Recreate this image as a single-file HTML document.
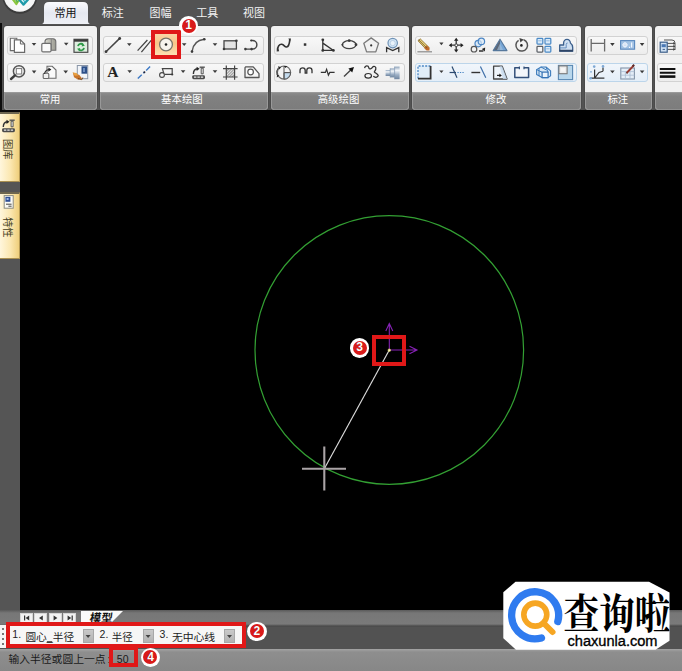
<!DOCTYPE html>
<html><head><meta charset="utf-8"><title>CAD</title><style>
*{margin:0;padding:0;box-sizing:border-box}
html,body{width:682px;height:671px;overflow:hidden;background:#000;font-family:"Liberation Sans",sans-serif}
#app{position:relative;width:682px;height:671px;overflow:hidden;background:#000}
.abs{position:absolute}
#ribbon{position:absolute;left:0;top:0;width:682px;height:110px;background:#535353;overflow:hidden}
#ribbon .edge{position:absolute;left:0;top:23px;width:1.5px;height:87px;background:#0c0c0c}
.tab-active{position:absolute;left:44px;top:2px;width:44px;height:22px;border-radius:5px 5px 0 0;background:linear-gradient(#fdfdfe,#e9ecf2 60%,#eef0f4);}
.panel{position:absolute;top:26px;height:84px;background:#f1f1f1;border-radius:3px 3px 4px 4px;overflow:hidden;box-shadow:0 0 0 1px #4a4a4a}
.panel .lab{position:absolute;left:0;right:0;top:66px;height:18px;background:linear-gradient(#8b8b8b,#818181 20%,#7c7c7c);border-top:1px solid #9a9a9a;box-shadow:inset 1px 0 #999,inset -1px 0 #999,inset 0 -1px #909090;border-radius:0 0 4px 4px}
.grp.blue{border-color:#bcd5ea;background:linear-gradient(#f1f6fb,#e4eef8)}
.grp{position:absolute;height:19px;border:1px solid #d2d2d2;border-radius:3px;background:linear-gradient(#f8f8f8,#ededed)}
#side{position:absolute;left:0;top:110px;width:20px;height:500px;background:#555;border-top:2px solid #0a0a0a}
.stab{position:absolute;left:0;width:20px;background:linear-gradient(90deg,#fff6dc,#fbe7b0 55%,#efcf7c);border-top:2px solid #6d6650;border-right:1px solid #b79b55;border-bottom:1px solid #a98f50}
#b1{position:absolute;left:0;top:610px;width:682px;height:17px;background:linear-gradient(#5a5a5a,#777 3px,#7a7a7a 14px,#4c4c4c 16px)}
#b2{position:absolute;left:0;top:627px;width:682px;height:22px;background:#525252}
#b3{position:absolute;left:0;top:649px;width:682px;height:22px;background:linear-gradient(#a4a4a4,#8e8e8e 3px,#878787)}
.nav{position:absolute;top:612.8px;width:13px;height:9.4px;background:#f2f2f2;border:1px solid #d6d6d6;border-bottom:none}
#tool{position:absolute;left:0;top:625px;width:243px;height:23px;background:#f6f6f6}
.dd{position:absolute;top:629px;height:14px;width:11px;background:linear-gradient(#c9c9c9,#b3b3b3);border:1px solid #a8a8a8}
.red{position:absolute;border:4px solid #e01818}
.badge{position:absolute;width:19.6px;height:19.6px;border-radius:50%;background:#fff}
.badge i{position:absolute;left:2.8px;top:2.8px;width:14px;height:14px;border-radius:50%;background:#d91a1a}
.badge b{position:absolute;left:0;top:0;width:19.6px;text-align:center;text-shadow:-0.6px 0 0 #7a0c0c;font:bold 12px/19.6px "Liberation Sans",sans-serif;color:#fff}
svg{position:absolute;left:0;top:0;overflow:visible}
</style></head><body><div id="app">
<div id="ribbon"><div class="edge"></div>
<div class="panel" style="left:4px;width:93px"><div class="lab"></div><div class="grp" style="left:3px;width:86px;top:10px"></div><div class="grp" style="left:3px;width:86px;top:37px"></div></div>
<div class="panel" style="left:100px;width:168px"><div class="lab"></div><div class="grp" style="left:3px;width:161px;top:10px"></div><div class="grp" style="left:3px;width:161px;top:37px"></div></div>
<div class="panel" style="left:271px;width:138px"><div class="lab"></div><div class="grp" style="left:3px;width:131px;top:10px"></div><div class="grp" style="left:3px;width:131px;top:37px"></div></div>
<div class="panel" style="left:412px;width:169px"><div class="lab"></div><div class="grp" style="left:3px;width:162px;top:10px"></div><div class="grp blue" style="left:3px;width:162px;top:37px"></div></div>
<div class="panel" style="left:585px;width:67px"><div class="lab"></div><div class="grp" style="left:2px;width:61px;top:10px"></div><div class="grp blue" style="left:2px;width:61px;top:37px"></div></div>
<div class="panel" style="left:655px;width:45px"><div class="lab"></div><div class="grp" style="left:2px;width:43px;top:10px"></div><div class="grp" style="left:2px;width:43px;top:37px"></div></div>
</div>
<div id="side"><div class="stab" style="top:0px;height:70px"></div><div class="stab" style="top:80px;height:67px"></div></div>
<div id="b1"></div><div id="b2"></div><div id="b3"></div>
<div class="nav" style="left:19.7px"></div>
<div class="nav" style="left:34.4px"></div>
<div class="nav" style="left:48.8px"></div>
<div class="nav" style="left:63.4px"></div>
<div id="tool"></div>
<div class="dd" style="left:83px"></div>
<div class="dd" style="left:143px"></div>
<div class="dd" style="left:224px"></div>
<svg width="682" height="671" viewBox="0 0 682 671">
<defs><linearGradient id="gtab" x1="0" y1="0" x2="0" y2="1"><stop offset="0" stop-color="#fbfbfd"/><stop offset="0.5" stop-color="#e6e9f1"/><stop offset="1" stop-color="#eef0f5"/></linearGradient></defs><path d="M41.6 24Q44 23.6 44 20.5V7Q44 2 49 2H83Q88 2 88 7V20.5Q88 23.6 90.4 24Z" fill="url(#gtab)"/>
<text x="65.5" y="16.9" font-family="'Liberation Sans','Noto Sans CJK SC',sans-serif" font-size="11" fill="#111" text-anchor="middle">常用</text>
<text x="112.7" y="16.9" font-family="'Liberation Sans','Noto Sans CJK SC',sans-serif" font-size="11" fill="#f4f4f4" text-anchor="middle">标注</text>
<text x="160.4" y="16.9" font-family="'Liberation Sans','Noto Sans CJK SC',sans-serif" font-size="11" fill="#f4f4f4" text-anchor="middle">图幅</text>
<text x="207.3" y="16.9" font-family="'Liberation Sans','Noto Sans CJK SC',sans-serif" font-size="11" fill="#f4f4f4" text-anchor="middle">工具</text>
<text x="254.1" y="16.9" font-family="'Liberation Sans','Noto Sans CJK SC',sans-serif" font-size="11" fill="#f4f4f4" text-anchor="middle">视图</text>
<text x="50.05" y="103.3" font-family="'Liberation Sans','Noto Sans CJK SC',sans-serif" font-size="10.4" fill="#fff" text-anchor="middle">常用</text>
<text x="181.9" y="103.3" font-family="'Liberation Sans','Noto Sans CJK SC',sans-serif" font-size="10.4" fill="#fff" text-anchor="middle">基本绘图</text>
<text x="338.5" y="103.3" font-family="'Liberation Sans','Noto Sans CJK SC',sans-serif" font-size="10.4" fill="#fff" text-anchor="middle">高级绘图</text>
<text x="496" y="103.3" font-family="'Liberation Sans','Noto Sans CJK SC',sans-serif" font-size="10.4" fill="#fff" text-anchor="middle">修改</text>
<text x="617.8" y="103.3" font-family="'Liberation Sans','Noto Sans CJK SC',sans-serif" font-size="10.4" fill="#fff" text-anchor="middle">标注</text>
<path d="M10.3 38.3h6.5v12.3h-6.5z" fill="#fbfbfb" stroke="#6a6a6a" stroke-width="1.1"/>
<path d="M14.4 39.8h6l4.2 4.2v8.3h-10.2z" fill="#fff" stroke="#6a6a6a" stroke-width="1.2"/><path d="M20.4 39.8v4.2h4.2" fill="none" stroke="#6a6a6a" stroke-width="1"/>
<path d="M31.7 43.0h4.6l-2.3 2.8z" fill="#3a3a3a"/>
<defs><linearGradient id="gsh" x1="0" x2="1"><stop offset="0" stop-color="#d8d8d0"/><stop offset="1" stop-color="#9a9a90"/></linearGradient></defs>
<path d="M45 41.5q0-2.6 3-2.8h5q2.8 0.2 2.8 2.8v8.7h-10.8z" fill="url(#gsh)" stroke="#6e6e6e" stroke-width="1.1"/>
<path d="M51.3 39v11" stroke="#777" stroke-width="0.8"/>
<rect x="41.8" y="43.3" width="9.2" height="8.6" rx="1.2" fill="#fafafa" stroke="#6e6e6e" stroke-width="1.2"/>
<path d="M63.900000000000006 42.800000000000004h4.6l-2.3 2.8z" fill="#3a3a3a"/>
<rect x="74" y="39.3" width="13.8" height="13" fill="#dfeee0" stroke="#4a4a4a" stroke-width="1.2"/><rect x="74" y="39.3" width="13.8" height="2.4" fill="#3c3c3c"/>
<path d="M78 46.2a3 3 0 0 1 5.2-1.4M84 47.8a3 3 0 0 1-5.2 1.6" fill="none" stroke="#2f9a48" stroke-width="1.8"/><path d="M82.3 43.2l2.6 2.6-3.2 0.6zM79.6 51.2l-2.6-2.4 3.2-0.8z" fill="#2f9a48"/>
<circle cx="19" cy="71.3" r="5.6" fill="#f4f4f4" stroke="#555" stroke-width="1.5"/><rect x="16.3" y="68.6" width="5.4" height="5.4" fill="#fff" stroke="#777" stroke-width="1"/><path d="M15 75.4l-4 3.6" stroke="#3c3c3c" stroke-width="2.4" stroke-linecap="round"/>
<path d="M31.8 70.6h4.6l-2.3 2.8z" fill="#3a3a3a"/>
<path d="M47 66.3h5.2l3.8 3.8v8.2h-9z" fill="#fafafa" stroke="#6a6a6a" stroke-width="1.1"/><rect x="43.2" y="73.3" width="5.6" height="5.2" rx="1" fill="#f0f0f0" stroke="#6a6a6a" stroke-width="1.1"/><path d="M44.5 74c0.5-3 2-4.2 4.5-4.4" fill="none" stroke="#333" stroke-width="1.2"/><path d="M48.4 67.5l3 2.1-3 2.1z" fill="#222"/>
<path d="M63.400000000000006 70.6h4.6l-2.3 2.8z" fill="#3a3a3a"/>
<rect x="77.3" y="65.5" width="10.4" height="13.2" fill="#f1f4f8" stroke="#8a96a8" stroke-width="1"/><rect x="81.5" y="66.3" width="5.6" height="7.4" fill="#2c4f88"/><path d="M83 68h2v4h-2z" fill="#6f8fc0"/>
<path d="M72.8 72.6l6.6 2.4 2.6 3.6-3.6 1.2-4.4-2.6z" fill="#c8742a"/><path d="M72.6 72.4l4 0.6 1.6 2.6-3.4 0.2z" fill="#e8a040"/><path d="M78 78.5l3.8 1.2 1-2.2" fill="none" stroke="#7a4a20" stroke-width="1"/>
<path d="M106 51.7L119.7 38.4" stroke="#454545" stroke-width="1.5"/><circle cx="106" cy="51.7" r="1.4" fill="#3a3a3a"/><circle cx="119.7" cy="38.5" r="1.4" fill="#3a3a3a"/>
<path d="M127.00000000000001 43.2h4.6l-2.3 2.8z" fill="#3a3a3a"/>
<path d="M137.6 50.6L147.4 40M141.4 52.2L151.2 40.4" stroke="#454545" stroke-width="1.3"/>
<defs><linearGradient id="gor" x1="0" y1="0" x2="0" y2="1"><stop offset="0" stop-color="#fbd9ae"/><stop offset="0.45" stop-color="#f8c588"/><stop offset="1" stop-color="#fde6bd"/></linearGradient></defs>
<rect x="153" y="31" width="27" height="27" fill="url(#gor)"/>
<circle cx="166" cy="44.5" r="6.4" fill="#f7f3ec" stroke="#77746a" stroke-width="1.3"/><circle cx="166" cy="44.5" r="1.3" fill="#222"/>
<path d="M181.89999999999998 43.2h4.6l-2.3 2.8z" fill="#3a3a3a"/>
<path d="M192 51.6C193 44.5 197.5 40 204.2 39.3" fill="none" stroke="#555" stroke-width="1.4"/><circle cx="192" cy="51.6" r="1.3" fill="#3a3a3a"/><circle cx="204.3" cy="39.3" r="1.3" fill="#3a3a3a"/>
<path d="M212.7 43.2h4.6l-2.3 2.8z" fill="#3a3a3a"/>
<rect x="224" y="40.8" width="12.4" height="8.2" fill="#e3e3e3" stroke="#454545" stroke-width="1.3"/><circle cx="236.4" cy="40.8" r="1.3" fill="#3a3a3a"/><circle cx="224" cy="49" r="1.3" fill="#3a3a3a"/>
<path d="M245.4 49.1H252.6A4.3 4.3 0 0 0 252.6 40.5H251.4" fill="none" stroke="#454545" stroke-width="1.4"/><circle cx="245.4" cy="49.1" r="1.3" fill="#3a3a3a"/><circle cx="251.6" cy="49.1" r="1.3" fill="#3a3a3a"/><circle cx="251.2" cy="40.5" r="1.1" fill="#3a3a3a"/>
<text x="112.9" y="77.2" font-family="Liberation Serif, serif" font-weight="bold" font-size="15.5" text-anchor="middle" fill="#222">A</text>
<path d="M127.39999999999999 70.3h4.6l-2.3 2.8z" fill="#3a3a3a"/>
<path d="M137.8 78.6L150.6 66.1" stroke="#3c78c4" stroke-width="1.4" stroke-dasharray="5.5 2.2 1.8 2.2"/><circle cx="144.4" cy="72.2" r="1" fill="#223"/>
<path d="M163.8 73.3L162.4 68.7H172.2V74.4H164.6" fill="#f4f4f4" stroke="#454545" stroke-width="1.2"/><circle cx="162" cy="75" r="2.4" fill="#f4f4f4" stroke="#454545" stroke-width="1.1"/><circle cx="172.2" cy="74.5" r="1.1" fill="#3a3a3a"/>
<path d="M180.79999999999998 70.3h4.6l-2.3 2.8z" fill="#3a3a3a"/>
<g transform="translate(192,66.6) scale(1.0)"><rect x="0.2" y="8.6" width="12.8" height="4" rx="1.4" fill="#4a4a4a"/><path d="M2 10.6h2.4M5.4 10.6h2.4M8.8 10.6h2.4" stroke="#e8e8e8" stroke-width="1.2"/><path d="M1.4 7.4C1.4 4 2.8 2.4 5.4 2.2" fill="none" stroke="#333" stroke-width="1.4"/><path d="M4.6 0.2l3 2-3 2.2z" fill="#222"/><path d="M7.6 0.6h5.2" stroke="#555" stroke-width="1.4"/><path d="M9.2 1.6h2v5.6h-2z" fill="#f2f2f2" stroke="#444" stroke-width="0.9"/></g>
<path d="M212.7 70.3h4.6l-2.3 2.8z" fill="#3a3a3a"/>
<defs><pattern id="hat" width="2" height="2" patternUnits="userSpaceOnUse" patternTransform="rotate(45)"><rect width="2" height="2" fill="#e4e4e4"/><rect width="1" height="2" fill="#9a9a9a"/></pattern></defs>
<rect x="226.3" y="68.6" width="8.2" height="8.4" fill="url(#hat)"/><path d="M226.3 65.4V79.8M234.6 65.4V79.8M223 68.6H237.6M223 77H237.6" stroke="#454545" stroke-width="1.2"/>
<path d="M245.8 66.8H253.2L259 73.6V77.5H245V67.6z" fill="#f6f6f6" stroke="#555" stroke-width="1.3" stroke-linejoin="round"/><circle cx="250.6" cy="72" r="2.8" fill="#fff" stroke="#555" stroke-width="1.2"/>
<path d="M277.5 50.8C277.4 46.4 279.4 44 281.8 44.3S284.6 47.3 286.6 47S289.5 44 289.8 39.4" fill="none" stroke="#333" stroke-width="1.6"/><path d="M276.6 51.4l1.4-3.6 1.2 3.4zM288.4 38.6h2.6l-1 3.4z" fill="#333"/>
<rect x="303.8" y="43.3" width="2.5" height="2.5" fill="#333"/>
<path d="M322.8 39.8V50.4H333.4M323.2 43.4L332.8 50" fill="none" stroke="#333" stroke-width="1.3"/><circle cx="322.8" cy="39.8" r="1.4" fill="#333"/><circle cx="333.4" cy="50.4" r="1.4" fill="#333"/><circle cx="322.8" cy="50.4" r="1.4" fill="#333"/>
<ellipse cx="349.2" cy="44.7" rx="6.8" ry="4" fill="#f6f6f6" stroke="#444" stroke-width="1.3"/><circle cx="349.2" cy="40.6" r="1.4" fill="#3a3a3a"/><circle cx="356" cy="44.7" r="1.4" fill="#3a3a3a"/><circle cx="342.4" cy="44.7" r="1.0" fill="#3a3a3a"/>
<path d="M371.2 37.9L378.6 43.3L375.8 51.9H366.6L363.8 43.3z" fill="#f1f1f1" stroke="#7a7a7a" stroke-width="1.3" stroke-linejoin="round"/><circle cx="371.2" cy="45.4" r="1.1" fill="#333"/>
<circle cx="392.7" cy="43.1" r="4.7" fill="#d2e6f6" stroke="#6f92b6" stroke-width="1.2"/><circle cx="392.7" cy="43.1" r="2.6" fill="#e9f3fb" stroke="#9fbcd8" stroke-width="0.6"/><path d="M386.6 52.2V47.6L392.7 50.6L398.8 47.6V52.2" fill="none" stroke="#333" stroke-width="1.3"/>
<circle cx="284" cy="72.6" r="6.6" fill="#f4f4f4" stroke="#6a6a6a" stroke-width="1.2"/><path d="M284 72.6H290.6A6.6 6.6 0 0 1 284 79.2z" fill="#c4dbee" stroke="#555" stroke-width="1"/><path d="M284 66V79M284 72.6H290.5" stroke="#555" stroke-width="1"/>
<path d="M279 69.4l-0.8-3.4 2.8 1.6zM279.4 75.8l-2.6 1.8 0.2-3.2z" fill="#222"/><path d="M278.4 67.6a7.6 7.6 0 0 0-1.4 7.4" fill="none" stroke="#333" stroke-width="0.9"/><path d="M284 65.9l3.4 0.2-2 2z" fill="#222"/>
<path d="M300 73.2V70.4A2.6 2.6 0 0 1 305.2 70.4V73.2H306.8V70.4A2.6 2.6 0 0 1 312 70.4V73.2" fill="none" stroke="#333" stroke-width="1.3"/>
<path d="M320.8 72.4H325.4L326.6 69.4L328.4 75.2L329.8 72.4H334.6" fill="none" stroke="#333" stroke-width="1.2"/>
<path d="M344 76.4L351 69.8" stroke="#444" stroke-width="1.4"/><path d="M354 67l-1.8 5.4-3.8-3.8z" fill="#111"/>
<path d="M364.6 68.2C365 65.2 368.4 65.4 368.8 67.6S371.6 68.8 372.6 67.2S376.4 66.4 375.8 69S373.4 71.6 375 72.6S379.4 75.2 377.6 76.6S374 77 373.4 76" fill="none" stroke="#333" stroke-width="1.3"/><ellipse cx="368.2" cy="75.8" rx="3.3" ry="2.3" fill="#f6f6f6" stroke="#333" stroke-width="1.2"/>
<defs><linearGradient id="gcy" x1="0" y1="0" x2="0" y2="1"><stop offset="0" stop-color="#8ea3bb"/><stop offset="0.3" stop-color="#f4f7fa"/><stop offset="0.65" stop-color="#9db0c6"/><stop offset="1" stop-color="#6f859f"/></linearGradient></defs>
<rect x="385.6" y="70" width="4.6" height="6" fill="url(#gcy)"/><rect x="390.2" y="68.4" width="4.4" height="9" fill="url(#gcy)"/><rect x="394.6" y="66.6" width="5" height="12.6" fill="url(#gcy)"/><path d="M390.2 68.4V77.4M394.6 66.6V79.2" stroke="#6a86a6" stroke-width="0.6"/>
<path d="M417.4 51.8H432" stroke="#8a8a8a" stroke-width="1.2"/><path d="M418 40.8l2.2-2 9 8.8-2.4 2.4z" fill="#e6d07a" stroke="#8a6a2a" stroke-width="0.8"/><path d="M426.6 45.2l3 3-0.2 2.4-2.8 0-2.4-2.6z" fill="#c06a2c"/><path d="M418.6 39.8l8.4 8.4" stroke="#6a5020" stroke-width="0.8"/>
<path d="M439.29999999999995 42.6h4.2l-2.1 2.6z" fill="#3a3a3a"/>
<path d="M456.2 39.6V50.8M450.6 45.2H461.8" stroke="#333" stroke-width="1.3"/><path d="M456.2 37.8l2.2 3h-4.4zM456.2 52.6l2.2-3h-4.4zM448.8 45.2l3-2.2v4.4zM463.6 45.2l-3-2.2v4.4z" fill="#222"/><rect x="455.1" y="44.1" width="2.2" height="2.2" fill="#fff" stroke="#333" stroke-width="0.6"/>
<circle cx="478.2" cy="43.6" r="3.2" fill="#d8e8f6" stroke="#4d86c4" stroke-width="1.2"/><circle cx="481.4" cy="41.4" r="3.2" fill="#d8e8f6" fill-opacity="0.7" stroke="#4d86c4" stroke-width="1.2"/><circle cx="474" cy="49.2" r="2.8" fill="#f4f4f4" stroke="#555" stroke-width="1.2"/><path d="M479 51H483.4" stroke="#222" stroke-width="1.4"/><path d="M485.2 47.6l-0.4 4-3-2.6z" fill="#222"/>
<path d="M500 39.2L493.2 50.6H500z" fill="#5d6878"/><path d="M500 39.2L507 50.6H500z" fill="#77a6d6"/><path d="M500 39.2L493.2 50.6H507z" fill="none" stroke="#56789c" stroke-width="1.1" stroke-linejoin="round"/><path d="M500 43.5L497 50H503z" fill="#a9c4de" opacity="0.6"/>
<path d="M523.6 39.8A5.8 5.8 0 1 1 518.6 40.4" fill="none" stroke="#555" stroke-width="1.5"/><path d="M519.4 38l4.4 1.4-3.4 3z" fill="#444"/><circle cx="521.4" cy="45.4" r="1.3" fill="#222"/>
<rect x="537" y="38.4" width="5.8" height="5.6" rx="0.8" fill="#dcebf8" stroke="#4b8ac6" stroke-width="1.25"/>
<path d="M538.2 40.8h3.4" stroke="#4b8ac6" stroke-width="0.7" opacity="0.7"/>
<rect x="545" y="38.4" width="5.8" height="5.6" rx="0.8" fill="#dcebf8" stroke="#4b8ac6" stroke-width="1.25"/>
<path d="M546.2 40.8h3.4" stroke="#4b8ac6" stroke-width="0.7" opacity="0.7"/>
<rect x="537" y="46.4" width="5.8" height="5.6" rx="0.8" fill="#f8f8f8" stroke="#5a5f66" stroke-width="1.25"/>
<rect x="545" y="46.4" width="5.8" height="5.6" rx="0.8" fill="#dcebf8" stroke="#4b8ac6" stroke-width="1.25"/>
<path d="M546.2 48.8h3.4" stroke="#4b8ac6" stroke-width="0.7" opacity="0.7"/>
<path d="M559.7 51.2V45H563.6V43A3.4 3.7 0 0 1 570.4 43Q572.7 44.6 572.7 47.6V51.2z" fill="#cfe0f2" stroke="#3b5f8c" stroke-width="1.3" stroke-linejoin="round"/><path d="M560 47.9H566.2V44.4Q566.4 42.8 567.6 43" fill="none" stroke="#5b86b8" stroke-width="0.9"/><path d="M559.4 50.7H572.9" stroke="#2e4566" stroke-width="1.9"/>
<rect x="418" y="66" width="12.6" height="12.6" fill="#e0edf8"/><path d="M418 78.6V66H430.6" fill="none" stroke="#4a86c4" stroke-width="1.3" stroke-dasharray="2 1.3"/><path d="M430.6 66V78.6H418" fill="none" stroke="#333" stroke-width="1.8"/>
<path d="M439.29999999999995 70.4h4.2l-2.1 2.6z" fill="#3a3a3a"/>
<path d="M449.6 72.5H456" stroke="#2c4a70" stroke-width="1.2"/><path d="M457.4 72.5H464.4" stroke="#4a86c4" stroke-width="1.2" stroke-dasharray="1.3 1.2"/><path d="M452 66.6L457 77.8" stroke="#2c4a70" stroke-width="1.2"/>
<path d="M471.4 72.5H480.2" stroke="#333" stroke-width="1.4"/><path d="M480.4 66.6L485.8 77.8" stroke="#3f6fa8" stroke-width="1.2"/>
<path d="M493.6 66.2H502.2L507 79H493.6z" fill="#eef4fa" stroke="#444" stroke-width="1.3" stroke-linejoin="round"/><path d="M502.2 66.2L507 79H503L499.6 66.2z" fill="#c5daee" opacity="0.8"/><path d="M497 75.4H500" stroke="#222" stroke-width="1.2"/><path d="M501.8 75.4l-2.4-1.8v3.6z" fill="#111"/>
<path d="M519.4 67.8H514.8V77.6H528.6V67.8H524" fill="#f3f6fa" stroke="#33507a" stroke-width="1.5" stroke-linejoin="round"/><path d="M519.4 66.6V69.2M524 66.6V69.2" stroke="#33507a" stroke-width="1.2"/>
<path d="M536.6 69.6L541 67H546L550.6 70.8V75.8L548 77.6H542L536.6 74.6z" fill="#d9e8f5" stroke="#3d7cbc" stroke-width="1.1" stroke-linejoin="round"/><path d="M536.6 69.6L542 72.2M541 67L546.4 70M546 67L548 72.2M539 68.2V76" fill="none" stroke="#3d7cbc" stroke-width="1"/><rect x="542.1" y="72.1" width="6" height="5.5" fill="#e9f3fb" stroke="#3573b4" stroke-width="1.2"/>
<rect x="558.4" y="65.4" width="14.2" height="14.2" fill="#b9d7ec" stroke="#5a88b2" stroke-width="1.1"/><rect x="558.9" y="65.9" width="8.2" height="7.8" fill="#ececec" stroke="#7a7a7a" stroke-width="1.1"/><rect x="561" y="68" width="4" height="3.6" fill="#f6f6f6"/>
<path d="M591.2 39V51.6M604.6 39V51.6M591.2 43.4H604.6" fill="none" stroke="#6a6a6a" stroke-width="1.3"/>
<path d="M610.1 43.1h4.6l-2.3 2.8z" fill="#3a3a3a"/>
<rect x="620.6" y="40.6" width="14" height="8.6" fill="#a3c2e4" stroke="#5a88be" stroke-width="1.1"/><circle cx="625" cy="44.9" r="2" fill="none" stroke="#f4f8ff" stroke-width="1"/><path d="M625 42.2V47.6M622.4 44.9H627.6" stroke="#f4f8ff" stroke-width="0.8"/><path d="M629 47.4h1M631.6 42.6V47.4" stroke="#f4f8ff" stroke-width="1.1"/>
<path d="M639.8000000000001 43.1h4.6l-2.3 2.8z" fill="#3a3a3a"/>
<path d="M594.6 69.6V78.2M590.6 78.2H604.4M594.6 78.2L599 72.4L603 71.2M603 71.2V67.6" fill="none" stroke="#333" stroke-width="1.2"/><circle cx="594.2" cy="66.6" r="1.3" fill="#7fa8d4"/><circle cx="603" cy="66.4" r="1.3" fill="#7fa8d4"/><circle cx="590.6" cy="78.2" r="1.3" fill="#7fa8d4"/><circle cx="591" cy="71.8" r="0.9" fill="#7fa8d4"/>
<path d="M610.1 70.5h4.6l-2.3 2.8z" fill="#3a3a3a"/>
<rect x="620.8" y="68" width="13.6" height="11" fill="#e4eef8" stroke="#8494a8" stroke-width="1.1"/><path d="M620.8 71.6H634.4M620.8 75.2H634.4M625.4 71.6V79M630 71.6V79" stroke="#a9bdd2" stroke-width="0.8"/><path d="M626.6 73L633.6 65.6" stroke="#9a3a30" stroke-width="1.9"/><path d="M626.2 73.6l0.4-1.6 1.2 1.2z" fill="#333"/><path d="M632.6 66.4l1.6-1.6" stroke="#5a2a28" stroke-width="2"/>
<path d="M639.8000000000001 70.5h4.6l-2.3 2.8z" fill="#3a3a3a"/>
<path d="M664 40H672Q675 40 675 43V50M666 43.4H675M666 46.4H675M666 49.4H675" fill="none" stroke="#555" stroke-width="1"/><path d="M673.2 42l2 1.4-2 1.4zM673.2 45l2 1.4-2 1.4zM673.2 48l2 1.4-2 1.4z" fill="#444"/><rect x="660.2" y="42.2" width="7" height="10" fill="#cfe0f2" stroke="#3d5f8a" stroke-width="1.2"/><rect x="661.6" y="44.2" width="4.2" height="3" fill="#4a78b4"/><path d="M662.6 49.4h2.4" stroke="#3d5f8a" stroke-width="1"/>
<path d="M659.8 69H675.4M659.8 72.8H675.4" stroke="#111" stroke-width="2"/><path d="M659.8 76.6H675.4" stroke="#111" stroke-width="2.6"/>
<defs><radialGradient id="gorb" cx="0.5" cy="0.6" r="0.6"><stop offset="0" stop-color="#ffffff"/><stop offset="0.75" stop-color="#f3f4f4"/><stop offset="1" stop-color="#c9cdd0"/></radialGradient></defs><circle cx="19.8" cy="-3.6" r="17.4" fill="#3c3c3c"/><circle cx="19.8" cy="-4.3" r="16" fill="url(#gorb)"/><path d="M12.6 -1L16.4 4L20.4 -2.4" fill="none" stroke="#8cc63f" stroke-width="2.2" stroke-linejoin="round"/><path d="M14.6 -1.8L17.6 2.4" stroke="#4fae4a" stroke-width="1.4"/><path d="M17.6 -2.4L23.4 4.6L29.4 -2" fill="none" stroke="#1f9aa8" stroke-width="2.4" stroke-linejoin="round"/><path d="M22 -1.6L25 2" stroke="#2fb8c8" stroke-width="1.2"/>
<g transform="translate(4,138.5) rotate(90)"><text x="0.4" y="0.1" font-family="'Liberation Sans','Noto Sans CJK SC',sans-serif" font-size="10.3" fill="#453e22">图库</text></g>
<g transform="translate(4,216.9) rotate(90)"><text x="0" y="0.1" font-family="'Liberation Sans','Noto Sans CJK SC',sans-serif" font-size="10.3" fill="#453e22">特性</text></g>
<g transform="translate(1.9,119.6) scale(1.0)"><rect x="0.2" y="8.6" width="12.8" height="4" rx="1.4" fill="#4a4a4a"/><path d="M2 10.6h2.4M5.4 10.6h2.4M8.8 10.6h2.4" stroke="#e8e8e8" stroke-width="1.2"/><path d="M1.4 7.4C1.4 4 2.8 2.4 5.4 2.2" fill="none" stroke="#333" stroke-width="1.4"/><path d="M4.6 0.2l3 2-3 2.2z" fill="#222"/><path d="M7.6 0.6h5.2" stroke="#555" stroke-width="1.4"/><path d="M9.2 1.6h2v5.6h-2z" fill="#f2f2f2" stroke="#444" stroke-width="0.9"/></g>
<rect x="4.2" y="195.6" width="9" height="12.6" fill="#fbfbf6" stroke="#8a8a80" stroke-width="1"/><rect x="5.4" y="196.8" width="5" height="5" fill="#2e4f96"/><rect x="6.6" y="198" width="2" height="2" fill="#9fb8e8"/><path d="M6 204.2h5.6M8.4 206.2h3.2" stroke="#444" stroke-width="1"/>
<circle cx="389.3" cy="350" r="134.3" fill="none" stroke="#33a033" stroke-width="1.2"/>
<line x1="389.3" y1="350" x2="324.3" y2="468.7" stroke="#dcdcdc" stroke-width="1.15"/>
<path d="M302 468.7H346M324.3 446.5V490.5" stroke="#aaa4a6" stroke-width="2.1" fill="none"/>
<path d="M389.3 350V324M385.8 331L389.3 323.5L392.8 331M389.3 350H416M409.5 346.3L417 350L409.5 353.7" stroke="#8822b8" stroke-width="1.05" fill="none"/>
<circle cx="389.3" cy="350.2" r="1.3" fill="#fffbd0" stroke="#c8c050" stroke-width="0.7"/>
<path d="M24 615.4v5h1.2v-5zM29.2 615.4v5l-3.6-2.5zM42.8 615.4v5l-3.8-2.5zM53.6 615.4v5l3.8-2.5zM67.6 615.4v5l3.6-2.5zM71.6 615.4v5h1.2v-5z" fill="#333"/>
<path d="M81 622V611H123L112 622Z" fill="#fafafa"/>
<g transform="translate(89.4,621.4) skewX(-8)"><text x="0" y="0.2" font-family="'Liberation Sans','Noto Sans CJK SC',sans-serif" font-size="11.4" font-weight="bold" fill="#111">模型</text></g>
<g fill="#777"><rect x="2" y="628" width="2" height="2"/><rect x="2" y="633" width="2" height="2"/><rect x="2" y="638" width="2" height="2"/><rect x="2" y="643" width="2" height="2"/></g>
<text x="12.3" y="637.6" font-family="Liberation Sans, sans-serif" font-size="10.5" font-weight="normal" fill="#222" text-anchor="start" >1.</text>
<text x="25.4" y="640.8" font-family="'Liberation Sans','Noto Sans CJK SC',sans-serif" font-size="10.5" fill="#222" textLength="48.8" lengthAdjust="spacingAndGlyphs">圆心_半径</text>
<rect x="46.9" y="641.3" width="5.3" height="1.1" fill="#222"/>
<text x="99.6" y="637.6" font-family="Liberation Sans, sans-serif" font-size="10.5" font-weight="normal" fill="#222" text-anchor="start" >2.</text>
<text x="111.8" y="640.8" font-family="'Liberation Sans','Noto Sans CJK SC',sans-serif" font-size="10.5" fill="#222">半径</text>
<text x="159.6" y="637.6" font-family="Liberation Sans, sans-serif" font-size="10.5" font-weight="normal" fill="#222" text-anchor="start" >3.</text>
<text x="171.9" y="640.8" font-family="'Liberation Sans','Noto Sans CJK SC',sans-serif" font-size="10.5" fill="#222" textLength="43.3" lengthAdjust="spacingAndGlyphs">无中心线</text>
<path d="M85.6 635h5l-2.5 3zM145.6 635h5l-2.5 3zM227 635h5l-2.5 3z" fill="#444"/>
<text x="8.5" y="663.4" font-family="'Liberation Sans','Noto Sans CJK SC',sans-serif" font-size="10.5" fill="#1a1a1a" textLength="97" lengthAdjust="spacingAndGlyphs">输入半径或圆上一点</text>
<text x="107.5" y="662.5" font-family="Liberation Sans, sans-serif" font-size="11" font-weight="normal" fill="#222" text-anchor="start" >:</text>
<text x="116.8" y="663.2" font-family="Liberation Sans, sans-serif" font-size="10.5" font-weight="normal" fill="#1a1a1a" text-anchor="start" >50</text>
</svg>
<div class="red" style="left:151px;top:30px;width:29.8px;height:28.5px"></div>
<div class="red" style="left:372.3px;top:335px;width:33.4px;height:31.4px"></div>
<div class="red" style="left:6px;top:622px;width:240px;height:26px"></div>
<div class="red" style="left:109px;top:646px;width:29px;height:21px"></div>
<div class="badge" style="left:178.9px;top:15.8px"><i></i><b>1</b></div>
<div class="badge" style="left:247.1px;top:621.7px"><i></i><b>2</b></div>
<div class="badge" style="left:349.9px;top:338.4px"><i></i><b>3</b></div>
<div class="badge" style="left:140.7px;top:647.5px"><i></i><b>4</b></div>
<svg width="682" height="671" viewBox="0 0 682 671">
<path d="M515.5 581.8H649L669.5 592.6V640.8L655.5 649.8H516L503.3 638.2V592.2Z" fill="#fff"/>
<path d="M557.8 621.5A23.5 23.5 0 1 0 541.5 637.9" fill="none" stroke="#2f7bef" stroke-width="7.3" stroke-linecap="round"/>
<circle cx="535.3" cy="614.6" r="11.5" fill="none" stroke="#f6a623" stroke-width="5.6"/>
<path d="M543.5 623L552.5 632" stroke="#f6a623" stroke-width="6" stroke-linecap="round"/>
<clipPath id="wmc"><path d="M515.5 581.8H649L669.5 592.6V640.8L655.5 649.8H516L503.3 638.2V592.2Z"/></clipPath>
<g clip-path="url(#wmc)"><text transform="translate(563.4,629.3) scale(1,1.16)" x="0" y="0" font-family="'Liberation Serif','Noto Serif CJK SC',serif" font-size="36" font-weight="bold" fill="#000" textLength="107" lengthAdjust="spacingAndGlyphs">查询啦</text></g>
<text x="567.5" y="645.5" font-family="Liberation Sans, sans-serif" font-size="15.5" fill="#000" stroke="#000" stroke-width="0.35" textLength="90" lengthAdjust="spacingAndGlyphs">chaxunla.com</text>
</svg>
</div></body></html>
